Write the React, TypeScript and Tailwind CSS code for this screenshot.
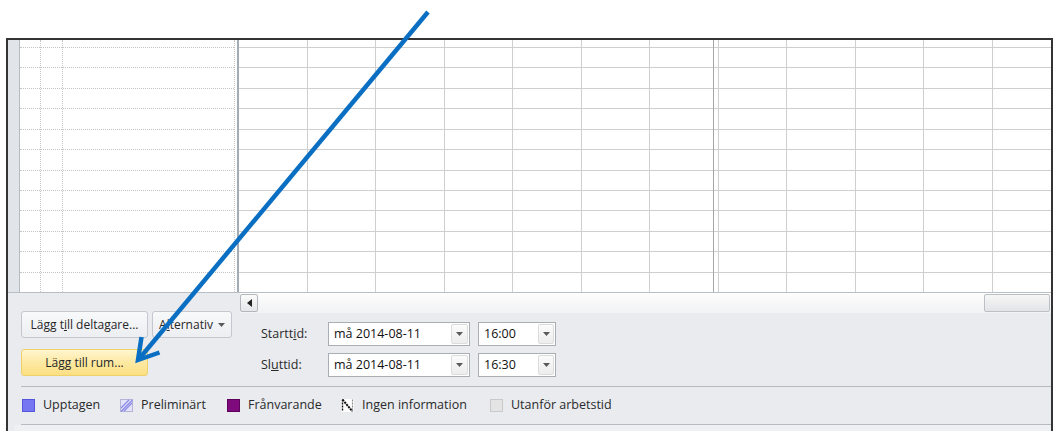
import React from "react";

const ROWS = 12;

// widths of the time-slot columns, left to right (each includes its right border)
const firstDay = ["w-[69px]", "w-[68px]", "w-[69px]", "w-[68px]", "w-[69px]", "w-[68px]"];
const secondDay = ["w-[68px]", "w-[69px]", "w-[68px]", "w-[69px]"];

function SlotColumn({ w, line = true }: { w: string; line?: boolean }) {
  return (
    <div className={`flex shrink-0 flex-col ${w} ${line ? "border-r border-[#cfcfcf]" : ""}`}>
      <div className="h-[8px] shrink-0 border-b border-[#cfcfcf]" />
      {Array.from({ length: ROWS }).map((_, i) => (
        <div key={i} className="flex-1 border-b border-[#cfcfcf] last:border-b-0" />
      ))}
    </div>
  );
}

function AttendeeColumn({ w, line = true }: { w: string; line?: boolean }) {
  return (
    <div className={`flex shrink-0 flex-col ${w} ${line ? "border-r border-dotted border-[#c4c4c4]" : ""}`}>
      <div className="h-[8px] shrink-0 border-b border-dotted border-[#c4c4c4]" />
      {Array.from({ length: ROWS }).map((_, i) => (
        <div key={i} className="flex-1 border-b border-dotted border-[#c4c4c4] last:border-b-0" />
      ))}
    </div>
  );
}

function Caret() {
  return (
    <svg width="7" height="4" viewBox="0 0 7 4">
      <path d="M0 0h7L3.5 4z" fill="#5a5a5a" />
    </svg>
  );
}

function Combo({ value, w, drop }: { value: string; w: string; drop: string }) {
  return (
    <div className={`flex h-[24px] shrink-0 border border-[#a9adb4] bg-white ${w}`}>
      <div className="flex flex-1 items-center pl-[5px] text-[12.5px] text-[#111]">{value}</div>
      <div className={`m-px flex items-center justify-center rounded-[2px] border border-[#dcdcdc] bg-linear-to-b from-[#fbfbfb] to-[#ededed] ${drop}`}>
        <Caret />
      </div>
    </div>
  );
}

function LegendIcon({ kind }: { kind: string }) {
  if (kind === "busy")
    return (
      <svg width="13" height="13" viewBox="0 0 13 13">
        <rect x="0.5" y="0.5" width="12" height="12" fill="#7676f2" stroke="#5555dc" />
      </svg>
    );
  if (kind === "tentative")
    return (
      <svg width="13" height="13" viewBox="0 0 13 13">
        <rect x="0.5" y="0.5" width="12" height="12" fill="#e2e2fa" stroke="#b4b4d8" />
        <path d="M1 9L9 1M4 12L12 4M1 12.5L12.5 1" stroke="#8c8ce6" strokeWidth="1.3" />
      </svg>
    );
  if (kind === "away")
    return (
      <svg width="13" height="13" viewBox="0 0 13 13">
        <rect x="0.5" y="0.5" width="12" height="12" fill="#7e0a7e" stroke="#5c005c" />
      </svg>
    );
  if (kind === "none")
    return (
      <svg width="13" height="13" viewBox="0 0 13 13">
        <rect x="0" y="0" width="13" height="13" fill="#ffffff" />
        <path d="M1.5 0.5V12.5" stroke="#111" strokeWidth="1.4" strokeDasharray="2 1" />
        <path d="M1.5 0.5L11.5 12.5" stroke="#111" strokeWidth="2" strokeDasharray="2.2 0.8" />
        <path d="M11.5 0.5V12.5" stroke="#888" strokeWidth="1.2" strokeDasharray="2 1" />
      </svg>
    );
  return (
    <svg width="13" height="13" viewBox="0 0 13 13">
      <rect x="0.5" y="0.5" width="12" height="12" fill="#e4e4e4" stroke="#c9c9c9" />
    </svg>
  );
}

const legend = [
  { kind: "busy", label: "Upptagen", w: "w-[98px]" },
  { kind: "tentative", label: "Preliminärt", w: "w-[107px]" },
  { kind: "away", label: "Frånvarande", w: "w-[114px]" },
  { kind: "none", label: "Ingen information", w: "w-[149px]" },
  { kind: "off", label: "Utanför arbetstid", w: "w-[140px]" },
];

export default function App() {
  return (
    <div className="relative h-[431px] w-[1055px] overflow-hidden bg-white font-['Open_Sans','Noto_Sans',sans-serif]">
      <div className="ml-[6px] mt-[38px] flex h-[393px] w-[1047px] flex-col border-x-2 border-t-2 border-[#343434] bg-[#e9ebef]">
        {/* scheduling grid */}
        <div className="flex h-[253px] shrink-0 border-b border-[#b9bfc7]">
          <div className="w-[12px] shrink-0 border-r border-[#b5bbc3] bg-[#e1e5ea]" />
          <div className="flex w-[219px] shrink-0 bg-white">
            <AttendeeColumn w="w-[21px]" />
            <AttendeeColumn w="w-[22px]" />
            <AttendeeColumn w="w-[172px]" />
            <div className="w-[2px]" />
            <div className="w-[2px] bg-[#a3abb5]" />
          </div>
          <div className="flex flex-1 bg-white">
            {firstDay.map((w, i) => (
              <SlotColumn key={i} w={w} />
            ))}
            <SlotColumn w="w-[63px]" line={false} />
            <div className="w-px shrink-0 bg-[#a7a7a7]" />
            <SlotColumn w="w-[5px]" />
            {secondDay.map((w, i) => (
              <SlotColumn key={i} w={w} />
            ))}
            <SlotColumn w="flex-1" line={false} />
          </div>
        </div>

        {/* buttons, scrollbar and times */}
        <div className="flex h-[93px] shrink-0">
          <div className="flex w-[232px] shrink-0 flex-col gap-[11px] pl-[13px] pt-[18px]">
            <div className="flex gap-[4px]">
              <button className="h-[27px] w-[127px] rounded-[3px] border border-[#c4c8ce] bg-linear-to-b from-[#f8f9fa] to-[#eceef1] text-[12px] text-[#262626]">
                Lägg t<span className="underline">i</span>ll deltagare...
              </button>
              <button className="flex h-[27px] w-[80px] items-center justify-center gap-[5px] rounded-[3px] border border-[#c4c8ce] bg-linear-to-b from-[#f8f9fa] to-[#eceef1] text-[12px] text-[#262626]">
                <span>
                  A<span className="underline">l</span>ternativ
                </span>
                <Caret />
              </button>
            </div>
            <button className="h-[27px] w-[127px] rounded-[3px] border border-[#efd16b] bg-linear-to-b from-[#fff6cf] via-[#fde9a2] to-[#fcdf83] text-[12px] text-[#262626]">
              Lägg till rum...
            </button>
          </div>

          <div className="flex flex-1 flex-col">
            <div className="flex h-[20px] shrink-0 items-center justify-between bg-linear-to-b from-[#fdfdfd] to-[#f1f2f3]">
              <div className="flex h-[18px] w-[18px] items-center justify-center rounded-[2px] border border-[#b3b6ba] bg-linear-to-b from-[#fafafa] to-[#e5e6e8]">
                <svg width="5" height="8" viewBox="0 0 5 8">
                  <path d="M5 0v8L0 4z" fill="#222" />
                </svg>
              </div>
              <div className="mr-px h-[18px] w-[66px] rounded-[2px] border border-[#bcbfc3] bg-linear-to-b from-[#f6f6f6] to-[#e3e4e6]" />
            </div>
            <div className="flex flex-col gap-[7px] pl-[21px] pt-[9px]">
              <div className="flex items-center">
                <span className="w-[67px] text-[12.5px] text-[#2a2a2a]">
                  Startt<span className="underline">i</span>d:
                </span>
                <Combo value="må 2014-08-11" w="w-[142px]" drop="w-[17px]" />
                <div className="w-[8px]" />
                <Combo value="16:00" w="w-[78px]" drop="w-[16px]" />
              </div>
              <div className="flex items-center">
                <span className="w-[67px] text-[12.5px] text-[#2a2a2a]">
                  Sl<span className="underline">u</span>ttid:
                </span>
                <Combo value="må 2014-08-11" w="w-[142px]" drop="w-[17px]" />
                <div className="w-[8px]" />
                <Combo value="16:30" w="w-[78px]" drop="w-[16px]" />
              </div>
            </div>
          </div>
        </div>

        {/* legend */}
        <div className="ml-[13px] flex h-[39px] shrink-0 items-center border-y border-[#b7bbc1] pl-px">
          {legend.map((item) => (
            <div key={item.kind} className={`flex shrink-0 items-center gap-[8px] ${item.w}`}>
              <LegendIcon kind={item.kind} />
              <span className="text-[12.5px] text-[#2a2a2a]">{item.label}</span>
            </div>
          ))}
        </div>
        <div className="ml-[6px] flex-1 bg-[#eef0f3]" />
      </div>

      {/* pointer arrow */}
      <svg className="pointer-events-none absolute left-0 top-0" width="1055" height="431" viewBox="0 0 1055 431">
        <path d="M428 12L139 359" stroke="#0a6fc2" strokeWidth="4.5" />
        <path d="M141.5 337L138 360L159.5 352.5" fill="none" stroke="#0a6fc2" strokeWidth="4.5" strokeLinejoin="miter" />
      </svg>
    </div>
  );
}
